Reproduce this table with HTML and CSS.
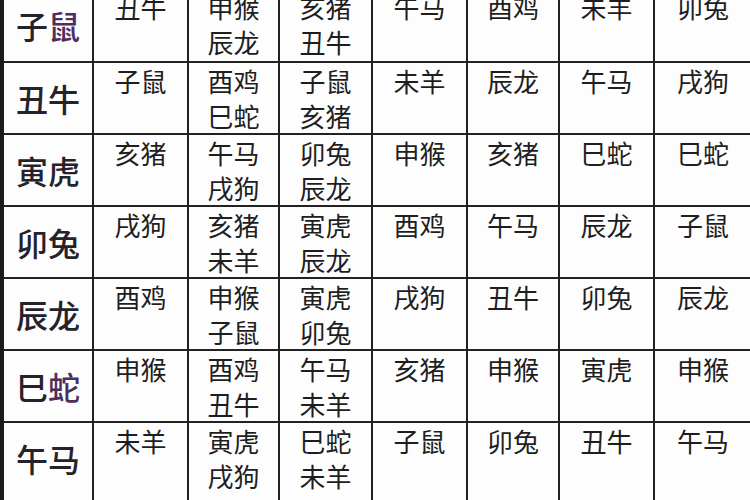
FILE: index.html
```html
<!DOCTYPE html>
<html lang="zh">
<head>
<meta charset="utf-8">
<link rel="stylesheet" href="styles.css">
</head>
<body>
<div class="frame">
<table class="chart">
<colgroup>
<col class="c1"><col class="c2"><col class="c3"><col class="c4"><col class="c5"><col class="c6"><col class="c7"><col class="c8">
</colgroup>
<tbody>
<tr class="first"><th>子<span class="tint">鼠</span></th><td>丑牛</td><td>申猴<br>辰龙</td><td>亥猪<br>丑牛</td><td>午马</td><td>酉鸡</td><td>未羊</td><td>卯兔</td></tr>
<tr><th>丑牛</th><td>子鼠</td><td>酉鸡<br>巳蛇</td><td>子鼠<br>亥猪</td><td>未羊</td><td>辰龙</td><td>午马</td><td>戌狗</td></tr>
<tr><th>寅虎</th><td>亥猪</td><td>午马<br>戌狗</td><td>卯兔<br>辰龙</td><td>申猴</td><td>亥猪</td><td>巳蛇</td><td>巳蛇</td></tr>
<tr><th>卯兔</th><td>戌狗</td><td>亥猪<br>未羊</td><td>寅虎<br>辰龙</td><td>酉鸡</td><td>午马</td><td>辰龙</td><td>子鼠</td></tr>
<tr><th>辰龙</th><td>酉鸡</td><td>申猴<br>子鼠</td><td>寅虎<br>卯兔</td><td>戌狗</td><td>丑牛</td><td>卯兔</td><td>辰龙</td></tr>
<tr><th>巳<span class="tint">蛇</span></th><td>申猴</td><td>酉鸡<br>丑牛</td><td>午马<br>未羊</td><td>亥猪</td><td>申猴</td><td>寅虎</td><td>申猴</td></tr>
<tr class="last"><th>午马</th><td>未羊</td><td>寅虎<br>戌狗</td><td>巳蛇<br>未羊</td><td>子鼠</td><td>卯兔</td><td>丑牛</td><td>午马</td></tr>
</tbody>
</table>
</div>
</body>
</html>
```
FILE: styles.css
```css
html, body {
  margin: 0;
  padding: 0;
  background: #fdfdfd;
}
.frame {
  width: 750px;
  height: 500px;
  overflow: hidden;
}
.chart {
  margin-top: -13px;
  width: 752px;
  table-layout: fixed;
  border-collapse: collapse;
  border-left: 4px solid #1c1c1c;
  font-family: "Noto Sans CJK SC", "Noto Sans", sans-serif;
  color: #1e1e1e;
}
.c1 { width: 91px; }
.c2 { width: 95px; }
.c3 { width: 91px; }
.c4 { width: 93px; }
.c5 { width: 95px; }
.c6 { width: 92px; }
.c7 { width: 95px; }
.c8 { width: 98px; }
.chart tr {
  height: 72px;
}
.chart tr.first {
  height: 74px;
}
.chart tr.last {
  height: 86px;
}
.chart th, .chart td {
  border: 2px solid #222;
  padding: 0;
  text-align: center;
  background: #fdfdfd;
}
.chart th {
  font-size: 32px;
  font-weight: 500;
  color: #26222a;
  vertical-align: middle;
}
.chart tr.last th {
  vertical-align: top;
  padding-top: 12px;
}
.chart td {
  font-size: 26px;
  line-height: 35px;
  vertical-align: top;
  padding-top: 0;
}
.tint {
  color: #4e2e5e;
}
```
